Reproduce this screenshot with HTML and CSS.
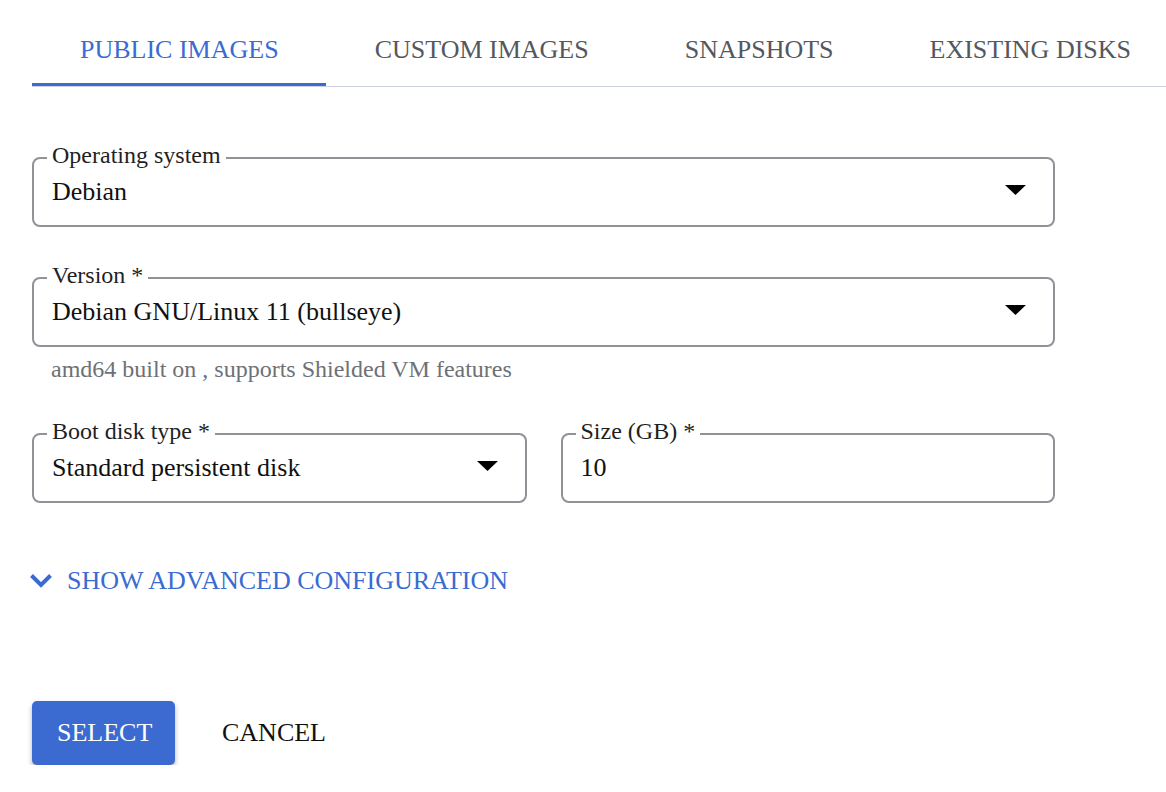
FILE: index.html
```html
<!DOCTYPE html>
<html lang="en">
<head>
<meta charset="utf-8">
<title>Boot disk</title>
<link rel="stylesheet" href="styles.css">
</head>
<body>
<div class="page">
  <nav class="tabs">
    <div class="tab active">PUBLIC IMAGES</div>
    <div class="tab">CUSTOM IMAGES</div>
    <div class="tab">SNAPSHOTS</div>
    <div class="tab">EXISTING DISKS</div>
  </nav>

  <form class="form">
    <div class="field field-os">
      <span class="label">Operating system</span>
      <span class="value">Debian</span>
      <svg class="arrow" viewBox="0 0 21 10" width="21" height="10"><polygon points="0,0 21,0 10.5,10" fill="#000"/></svg>
    </div>

    <div class="field field-version">
      <span class="label">Version *</span>
      <span class="value">Debian GNU/Linux 11 (bullseye)</span>
      <svg class="arrow" viewBox="0 0 21 10" width="21" height="10"><polygon points="0,0 21,0 10.5,10" fill="#000"/></svg>
    </div>
    <p class="helper">amd64 built on , supports Shielded VM features</p>

    <div class="row">
      <div class="field">
        <span class="label">Boot disk type *</span>
        <span class="value">Standard persistent disk</span>
        <svg class="arrow" viewBox="0 0 21 10" width="21" height="10"><polygon points="0,0 21,0 10.5,10" fill="#000"/></svg>
      </div>
      <div class="field">
        <span class="label">Size (GB) *</span>
        <span class="value">10</span>
      </div>
    </div>

    <div class="advanced">
      <svg class="chevron" viewBox="0 0 24 16" width="24" height="16"><polyline points="2.5,2.5 12,12 21.5,2.5" fill="none" stroke="#3a6bd1" stroke-width="4"/></svg>
      <span>SHOW ADVANCED CONFIGURATION</span>
    </div>

    <div class="actions">
      <button type="button" class="btn btn-primary">SELECT</button>
      <button type="button" class="btn btn-text">CANCEL</button>
    </div>
  </form>
</div>
</body>
</html>
```

FILE: styles.css
```css
html, body {
  margin: 0;
  padding: 0;
  background: #ffffff;
  overflow: hidden;
}

body {
  font-family: "Liberation Serif", "Times New Roman", serif;
  color: #111111;
}

.page {
  padding-left: 32px;
}

.tabs {
  display: flex;
  border-bottom: 1px solid #cdd3de;
  white-space: nowrap;
  overflow: hidden;
}

.tab {
  flex-shrink: 0;
  position: relative;
  padding: 35px 48px 21px;
  font-size: 26px;
  line-height: 30px;
  color: #54585e;
}

.tab.active {
  color: #3a6bd1;
}

.tab.active::after {
  content: "";
  position: absolute;
  left: 0;
  right: 1px;
  bottom: -1px;
  height: 4px;
  background: #3a6bd1;
}

.form {
  width: 1023px;
  margin: 70px 0 0;
}

.field {
  position: relative;
  box-sizing: border-box;
  height: 70px;
  border: 2px solid #8f9297;
  border-radius: 8px;
  display: flex;
  align-items: center;
  justify-content: space-between;
  padding: 0 27px 0 18px;
}

.field-version {
  margin-top: 50px;
}

.label {
  position: absolute;
  top: -18px;
  left: 13px;
  padding: 0 5px;
  background: #ffffff;
  font-size: 24px;
  line-height: 28px;
  color: #1f1f1f;
}

.value {
  font-size: 26px;
  line-height: 30px;
  color: #111111;
}

.arrow {
  flex-shrink: 0;
  margin-top: -4px;
}

.helper {
  margin: 8px 0 0 19px;
  font-size: 24px;
  line-height: 28px;
  color: #6d7177;
}

.row {
  margin-top: 50px;
  display: grid;
  grid-template-columns: 1fr 1fr;
  gap: 34px;
}

.advanced {
  margin-top: 63px;
  margin-left: -3px;
  display: flex;
  align-items: center;
  gap: 14px;
  color: #3a6bd1;
  font-size: 26px;
  line-height: 30px;
}

.chevron {
  flex-shrink: 0;
}

.actions {
  margin-top: 105px;
  display: flex;
  align-items: center;
  gap: 22px;
}

.btn {
  font-family: "Liberation Serif", "Times New Roman", serif;
  font-size: 26px;
  line-height: 30px;
  height: 64px;
  padding: 0 25px;
  border: 0;
  border-radius: 5px;
  background: transparent;
  color: #111111;
  cursor: pointer;
}

.btn-primary {
  width: 143px;
  background: #3b6bd0;
  color: #ffffff;
  box-shadow: 0 3px 5px rgba(0, 0, 0, 0.3);
}
```
